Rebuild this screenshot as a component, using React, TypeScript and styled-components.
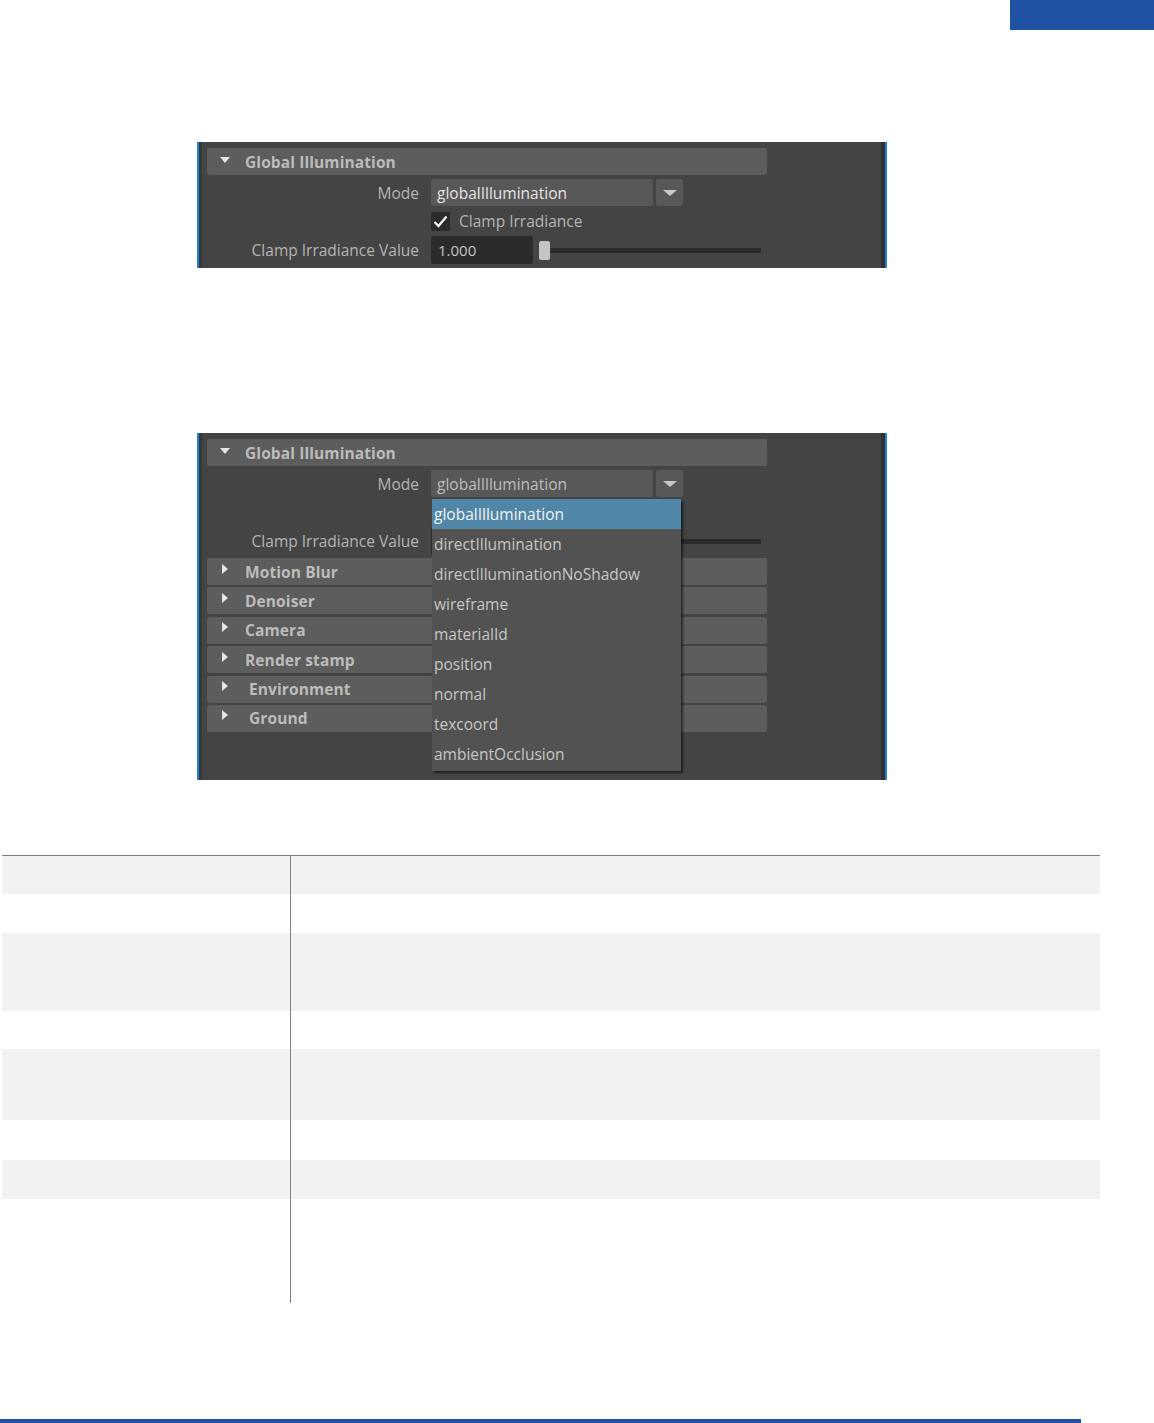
import React from "react";
import styled, { createGlobalStyle } from "styled-components";

const Global = createGlobalStyle`
  html, body { margin: 0; padding: 0; background: #ffffff; }
  body { font-family: "Open Sans", "Noto Sans", "DejaVu Sans", sans-serif; }
`;

const Page = styled.div`
  width: 1154px;
  height: 1423px;
  display: flex;
  flex-direction: column;
  overflow: hidden;
`;

const TopBar = styled.div`
  display: flex;
  justify-content: flex-end;
  height: 30px;
`;

const Tab = styled.div`
  width: 144px;
  height: 30px;
  background: #2052a3;
`;

const Figure = styled.div<{ $top: number; $height: number }>`
  margin-top: ${(p) => p.$top}px;
  margin-left: 197px;
  width: 690px;
  height: ${(p) => p.$height}px;
  box-sizing: border-box;
  border-left: 2px solid #1d80d8;
  border-right: 2px solid #1d80d8;
  display: flex;
`;

const Frame = styled.div`
  flex: 1;
  background: #444444;
  border-left: 3px solid #373737;
  border-right: 4px solid #303030;
  padding: 6px 0 0 5px;
  display: flex;
  flex-direction: column;
`;

const Header = styled.div`
  width: 560px;
  height: 27px;
  background: #5d5d5d;
  border-radius: 2px;
  display: flex;
  align-items: center;
  flex-shrink: 0;
  color: #bcbcbc;
  font-weight: 700;
  font-size: 15.5px;
  letter-spacing: 0.1px;
`;

const Arrow = styled.span<{ $open?: boolean; $pad?: number }>`
  width: 0;
  height: 0;
  margin-left: ${(p) => (p.$open ? 13 : 15)}px;
  margin-right: ${(p) => (p.$open ? 15 : 17) + (p.$pad || 0)}px;
  ${(p) =>
    p.$open
      ? `border-left: 5px solid transparent; border-right: 5px solid transparent; border-top: 6px solid #e6e6e6; margin-top: -3px;`
      : `border-top: 5px solid transparent; border-bottom: 5px solid transparent; border-left: 6px solid #e6e6e6; margin-top: -6px;`}
`;

const Row = styled.div<{ $h: number; $mt: number }>`
  display: flex;
  align-items: center;
  height: ${(p) => p.$h}px;
  margin-top: ${(p) => p.$mt}px;
  flex-shrink: 0;
  position: relative;
`;

const Label = styled.div`
  width: 212px;
  padding-right: 12px;
  text-align: right;
  color: #b4b4b4;
  font-size: 15.5px;
  flex-shrink: 0;
`;

const Field = styled.div<{ $dim?: boolean }>`
  width: 216px;
  height: 27px;
  background: #585858;
  border-radius: 2px;
  padding-left: 6px;
  display: flex;
  align-items: center;
  color: ${(p) => (p.$dim ? "#bdbdbd" : "#e4e4e4")};
  font-size: 15.5px;
`;

const ArrowButton = styled.div`
  width: 27px;
  height: 27px;
  margin-left: 3px;
  background: #585858;
  border-radius: 2px;
  display: flex;
  align-items: center;
  justify-content: center;
  &::after {
    content: "";
    width: 0;
    height: 0;
    border-left: 7px solid transparent;
    border-right: 7px solid transparent;
    border-top: 6px solid #c8c8c8;
  }
`;

const Check = styled.div`
  width: 19px;
  height: 19px;
  margin-left: 224px;
  background: #2b2b2b;
  border-radius: 2px;
  display: flex;
  align-items: center;
  justify-content: center;
`;

const CheckText = styled.div`
  margin-left: 9px;
  color: #b4b4b4;
  font-size: 15.5px;
`;

const NumInput = styled.div`
  width: 95px;
  height: 28px;
  padding-left: 7px;
  background: #2b2b2b;
  border-radius: 2px;
  display: flex;
  align-items: center;
  color: #c4c4c4;
  font-size: 15px;
`;

const Slider = styled.div`
  margin-left: 6px;
  width: 222px;
  display: flex;
  align-items: center;
`;

const Handle = styled.div`
  width: 11px;
  height: 19px;
  background: #c4c4c4;
  border-radius: 2px;
  flex-shrink: 0;
`;

const Track = styled.div`
  flex: 1;
  height: 5px;
  background: #2b2b2b;
`;

const Sections = styled.div`
  display: flex;
  flex-direction: column;
  gap: 2.4px;
  margin-top: 3px;
`;

const Menu = styled.div`
  position: absolute;
  left: 225px;
  top: 29px;
  width: 249px;
  background: #525252;
  box-shadow: 2px 2px 2px rgba(0, 0, 0, 0.55);
  padding-bottom: 2px;
  z-index: 2;
`;

const MenuItem = styled.div<{ $active?: boolean }>`
  height: 30px;
  padding-left: 2px;
  display: flex;
  align-items: center;
  font-size: 15.5px;
  background: ${(p) => (p.$active ? "#5086a8" : "transparent")};
  color: ${(p) => (p.$active ? "#f4f4f4" : "#c6c6c6")};
`;

const Table = styled.div`
  margin-top: 75px;
  margin-left: 2px;
  width: 1098px;
  border-top: 1.5px solid #7f7f7f;
  display: grid;
  grid-template-columns: 288px 1fr;
`;

const Cell = styled.div<{ $h: number; $shade: boolean; $divider?: boolean }>`
  height: ${(p) => p.$h}px;
  background: ${(p) => (p.$shade ? "#f2f2f2" : "#ffffff")};
  ${(p) => (p.$divider ? "border-left: 1px solid #7f7f7f;" : "")}
`;

const Footer = styled.div`
  margin-top: 116px;
  width: 1081px;
  height: 4px;
  background: #2052a3;
`;

const CheckIcon = () => (
  <svg width="15" height="13" viewBox="0 0 15 13">
    <polyline points="1.5,7 5.5,11 13.5,1.5" fill="none" stroke="#f0f0f0" strokeWidth="2.4" />
  </svg>
);

const options = [
  "globalIllumination",
  "directIllumination",
  "directIlluminationNoShadow",
  "wireframe",
  "materialId",
  "position",
  "normal",
  "texcoord",
  "ambientOcclusion",
];

const sections: [string, number][] = [
  ["Motion Blur", 0],
  ["Denoiser", 0],
  ["Camera", 0],
  ["Render stamp", 0],
  ["Environment", 4],
  ["Ground", 4],
];

const rows: number[] = [38, 39, 78, 38, 71, 40, 39, 104];

export default function App() {
  return (
    <Page>
      <Global />
      <TopBar>
        <Tab />
      </TopBar>

      <Figure $top={112} $height={126}>
        <Frame>
          <Header>
            <Arrow $open />
            Global Illumination
          </Header>
          <Row $h={27} $mt={4}>
            <Label>Mode</Label>
            <Field>globalIllumination</Field>
            <ArrowButton />
          </Row>
          <Row $h={22} $mt={4}>
            <Check>
              <CheckIcon />
            </Check>
            <CheckText>Clamp Irradiance</CheckText>
          </Row>
          <Row $h={28} $mt={4}>
            <Label>Clamp Irradiance Value</Label>
            <NumInput>1.000</NumInput>
            <Slider>
              <Handle />
              <Track />
            </Slider>
          </Row>
        </Frame>
      </Figure>

      <Figure $top={165} $height={347}>
        <Frame>
          <Header>
            <Arrow $open />
            Global Illumination
          </Header>
          <Row $h={27} $mt={4}>
            <Label>Mode</Label>
            <Field $dim>globalIllumination</Field>
            <ArrowButton />
            <Menu>
              {options.map((o, i) => (
                <MenuItem key={o} $active={i === 0}>
                  {o}
                </MenuItem>
              ))}
            </Menu>
          </Row>
          <Row $h={22} $mt={4} />
          <Row $h={28} $mt={4}>
            <Label>Clamp Irradiance Value</Label>
            <NumInput />
            <Slider>
              <Handle />
              <Track />
            </Slider>
          </Row>
          <Sections>
            {sections.map(([name, pad]) => (
              <Header key={name}>
                <Arrow $pad={pad} />
                {name}
              </Header>
            ))}
          </Sections>
        </Frame>
      </Figure>

      <Table>
        {rows.map((h, i) => (
          <React.Fragment key={i}>
            <Cell $h={h} $shade={i % 2 === 0} />
            <Cell $h={h} $shade={i % 2 === 0} $divider />
          </React.Fragment>
        ))}
      </Table>

      <Footer />
    </Page>
  );
}
